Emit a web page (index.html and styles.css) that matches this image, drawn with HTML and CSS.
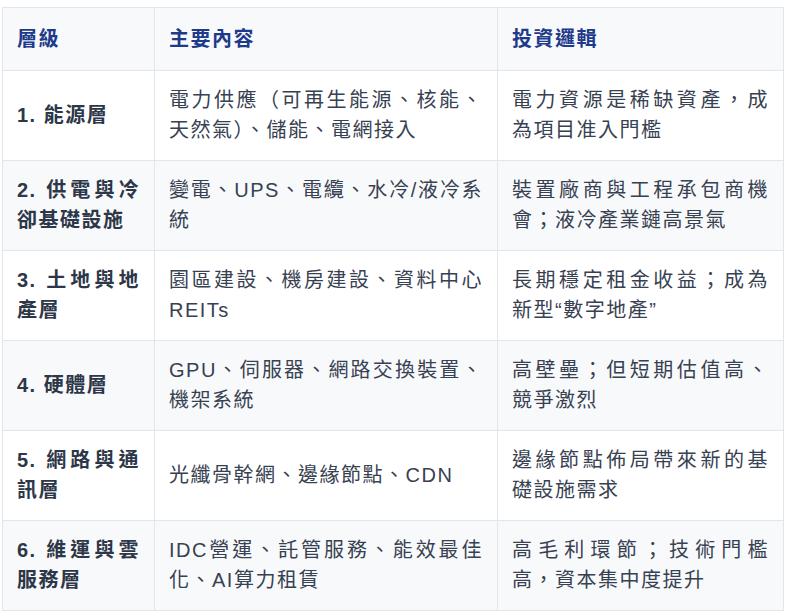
FILE: index.html
```html
<!DOCTYPE html>
<html lang="zh-Hant">
<head>
<meta charset="utf-8">
<link rel="stylesheet" href="styles.css">
</head>
<body>
<table class="grid">
  <colgroup>
    <col class="c1"><col class="c2"><col class="c3">
  </colgroup>
  <thead>
    <tr><th>層級</th><th>主要內容</th><th>投資邏輯</th></tr>
  </thead>
  <tbody>
    <tr><td class="layer">1. 能源層</td><td>電力供應（可再生能源、核能、天然氣）、儲能、電網接入</td><td>電力資源是稀缺資產，成為項目准入門檻</td></tr>
    <tr><td class="layer">2. 供電與冷卻基礎設施</td><td>變電、UPS、電纜、水冷/液冷系統</td><td>裝置廠商與工程承包商機會；液冷產業鏈高景氣</td></tr>
    <tr><td class="layer">3. 土地與地產層</td><td>園區建設、機房建設、資料中心REITs</td><td>長期穩定租金收益；成為新型“數字地產”</td></tr>
    <tr><td class="layer">4. 硬體層</td><td>GPU、伺服器、網路交換裝置、機架系統</td><td>高壁壘；但短期估值高、競爭激烈</td></tr>
    <tr><td class="layer">5. 網路與通訊層</td><td>光纖骨幹網、邊緣節點、CDN</td><td>邊緣節點佈局帶來新的基礎設施需求</td></tr>
    <tr><td class="layer">6. 維運與雲服務層</td><td>IDC營運、託管服務、能效最佳化、AI算力租賃</td><td>高毛利環節；技術門檻高，資本集中度提升</td></tr>
  </tbody>
</table>
</body>
</html>
```
FILE: styles.css
```css
html, body {
  margin: 0;
  padding: 0;
  background: #ffffff;
}
body {
  padding: 7px 0 0 2px;
  font-family: "Liberation Sans", "Noto Sans CJK TC", sans-serif;
}
.grid {
  border-collapse: collapse;
  table-layout: fixed;
  width: 781px;
  font-size: 20px;
  line-height: 30.5px;
  letter-spacing: 1.5px;
  color: #374151;
}
.c1 { width: 152px; }
.c2 { width: 343px; }
.c3 { width: 286px; }
.grid th, .grid td {
  border: 1px solid #e2e5ea;
  text-align: justify;
  vertical-align: middle;
}
.grid th {
  padding: 15.5px 14px;
  background: #f8f9fb;
  color: #1e3a8a;
  font-weight: 700;
  text-align: left;
}
.grid td {
  padding: 14px 14px;
}
.grid tbody tr:nth-child(even) td {
  background: #f8f9fb;
}
.grid td.layer {
  font-weight: 700;
  color: #2d3748;
}
```
